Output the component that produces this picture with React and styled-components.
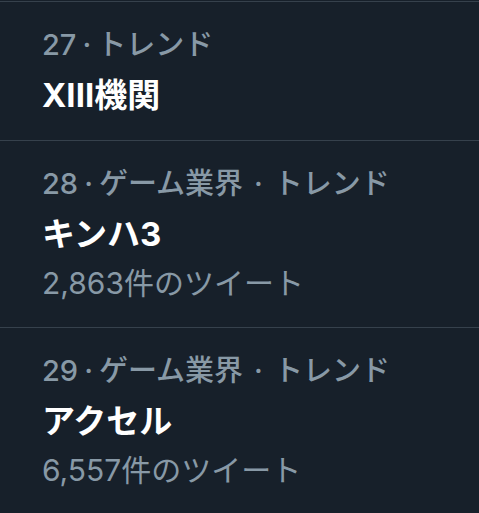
import React from 'react';
import styled, { createGlobalStyle } from 'styled-components';

const GlobalStyle = createGlobalStyle`
  html, body {
    margin: 0;
    padding: 0;
    background: #17202a;
  }
  body {
    font-family: Inter, "Noto Sans CJK JP", sans-serif;
    -webkit-font-smoothing: antialiased;
  }
`;

const trends = [
  { rank: 27, category: null, name: 'XIII機関', count: null },
  { rank: 28, category: 'ゲーム業界', name: 'キンハ3', count: '2,863' },
  { rank: 29, category: 'ゲーム業界', name: 'アクセル', count: '6,557' },
];

const List = styled.div`
  padding-top: 1px;
  background: #17202a;
  min-height: 100vh;
  box-sizing: border-box;
`;

const Item = styled.div`
  display: flex;
  flex-direction: column;
  border-top: 1px solid #36414c;
  padding: 18px 42px 20px;
`;

const Meta = styled.div`
  display: flex;
  align-items: center;
  font-size: 29px;
  font-weight: 500;
  line-height: 50px;
  color: #8899a6;
  white-space: nowrap;
`;

const Dot = styled.span`
  padding: 0 ${(p) => (p.wide ? '11px' : '6px')};
`;

const Name = styled.div`
  font-size: 33px;
  font-weight: 700;
  line-height: 50px;
  color: #ffffff;
`;

const Count = styled.div`
  font-size: 30px;
  line-height: 48px;
  color: #8899a6;
`;

export default function App() {
  return (
    <>
      <GlobalStyle />
      <List>
        {trends.map((t) => (
          <Item key={t.rank}>
            <Meta>
              <span>{t.rank}</span>
              <Dot>·</Dot>
              {t.category && (
                <>
                  <span>{t.category}</span>
                  <Dot wide>·</Dot>
                </>
              )}
              <span>トレンド</span>
            </Meta>
            <Name>{t.name}</Name>
            {t.count && <Count>{t.count}件のツイート</Count>}
          </Item>
        ))}
      </List>
    </>
  );
}
